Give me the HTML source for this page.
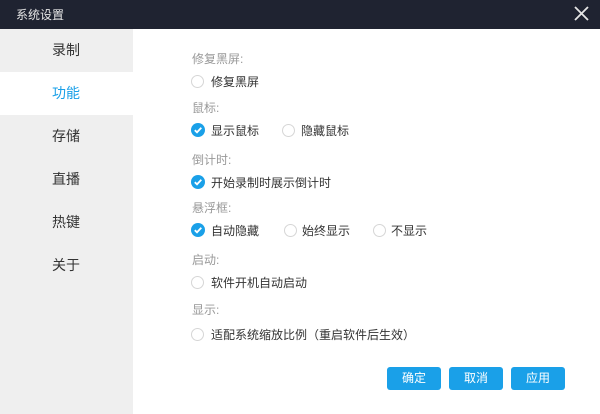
<html><head><style>
body{margin:0;width:600px;height:414px;overflow:hidden;font-family:"Liberation Sans","Noto Sans CJK SC",sans-serif;background:#fff;position:relative}
.t{position:absolute;left:0;top:0;width:600px;height:29px;background:#1f2331;color:#e6e6e6;font-size:12px}
.side{position:absolute;left:0;top:29px;width:133px;height:385px;background:#efefef}
.si{position:absolute;left:0;width:133px;height:43px;line-height:43px;font-size:14px;color:#333;padding-left:52px;box-sizing:border-box}
.a{position:absolute;font-size:12px;white-space:nowrap}
.lb{color:#999}
.op{color:#333}
.r{position:absolute;width:13px;height:13px;border:1px solid #d6d6d6;border-radius:50%;box-sizing:border-box;background:#fff}
.c{position:absolute;width:14px;height:14px;border-radius:50%;background:#1aa0e8}
.b{position:absolute;top:367px;width:54px;height:23px;background:#1aa0e8;border-radius:3px;color:#fff;font-size:12px;text-align:center;line-height:23px}
</style></head><body>
<div class="t"><span style="position:absolute;left:16px;top:6px">系统设置</span>
<svg style="position:absolute;left:574px;top:6px" width="15" height="15"><path d="M1 1L14 14M14 1L1 14" stroke="#e6e6e6" stroke-width="1.8"/></svg></div>
<div class="side">
<div class="si" style="top:0">录制</div>
<div class="si" style="top:43px;background:#fff;color:#1aa0e8">功能</div>
<div class="si" style="top:86px">存储</div>
<div class="si" style="top:129px">直播</div>
<div class="si" style="top:172px">热键</div>
<div class="si" style="top:215px">关于</div>
</div>
<div class="a lb" style="left:192px;top:50px">修复黑屏:</div>
<div class="r" style="left:191px;top:75px"></div><div class="a op" style="left:211px;top:73px">修复黑屏</div>
<div class="a lb" style="left:192px;top:99px">鼠标:</div>
<svg class="c" style="left:191px;top:123px" viewBox="0 0 14 14"><path d="M3.8 7.2L6 9.3L10.3 4.8" stroke="#fff" stroke-width="1.8" fill="none"/></svg>
<div class="a op" style="left:211px;top:122px">显示鼠标</div>
<div class="r" style="left:282px;top:124px"></div><div class="a op" style="left:301px;top:122px">隐藏鼠标</div>
<div class="a lb" style="left:192px;top:151px">倒计时:</div>
<svg class="c" style="left:191px;top:175px" viewBox="0 0 14 14"><path d="M3.8 7.2L6 9.3L10.3 4.8" stroke="#fff" stroke-width="1.8" fill="none"/></svg>
<div class="a op" style="left:211px;top:174px">开始录制时展示倒计时</div>
<div class="a lb" style="left:192px;top:199px">悬浮框:</div>
<svg class="c" style="left:191px;top:223px" viewBox="0 0 14 14"><path d="M3.8 7.2L6 9.3L10.3 4.8" stroke="#fff" stroke-width="1.8" fill="none"/></svg>
<div class="a op" style="left:211px;top:222px">自动隐藏</div>
<div class="r" style="left:284px;top:224px"></div><div class="a op" style="left:302px;top:222px">始终显示</div>
<div class="r" style="left:373px;top:224px"></div><div class="a op" style="left:391px;top:222px">不显示</div>
<div class="a lb" style="left:192px;top:251px">启动:</div>
<div class="r" style="left:191px;top:276px"></div><div class="a op" style="left:211px;top:274px">软件开机自动启动</div>
<div class="a lb" style="left:192px;top:301px">显示:</div>
<div class="r" style="left:191px;top:328px"></div><div class="a op" style="left:211px;top:326px">适配系统缩放比例（重启软件后生效）</div>
<div class="b" style="left:387px">确定</div>
<div class="b" style="left:449px">取消</div>
<div class="b" style="left:511px">应用</div>
</body></html>
